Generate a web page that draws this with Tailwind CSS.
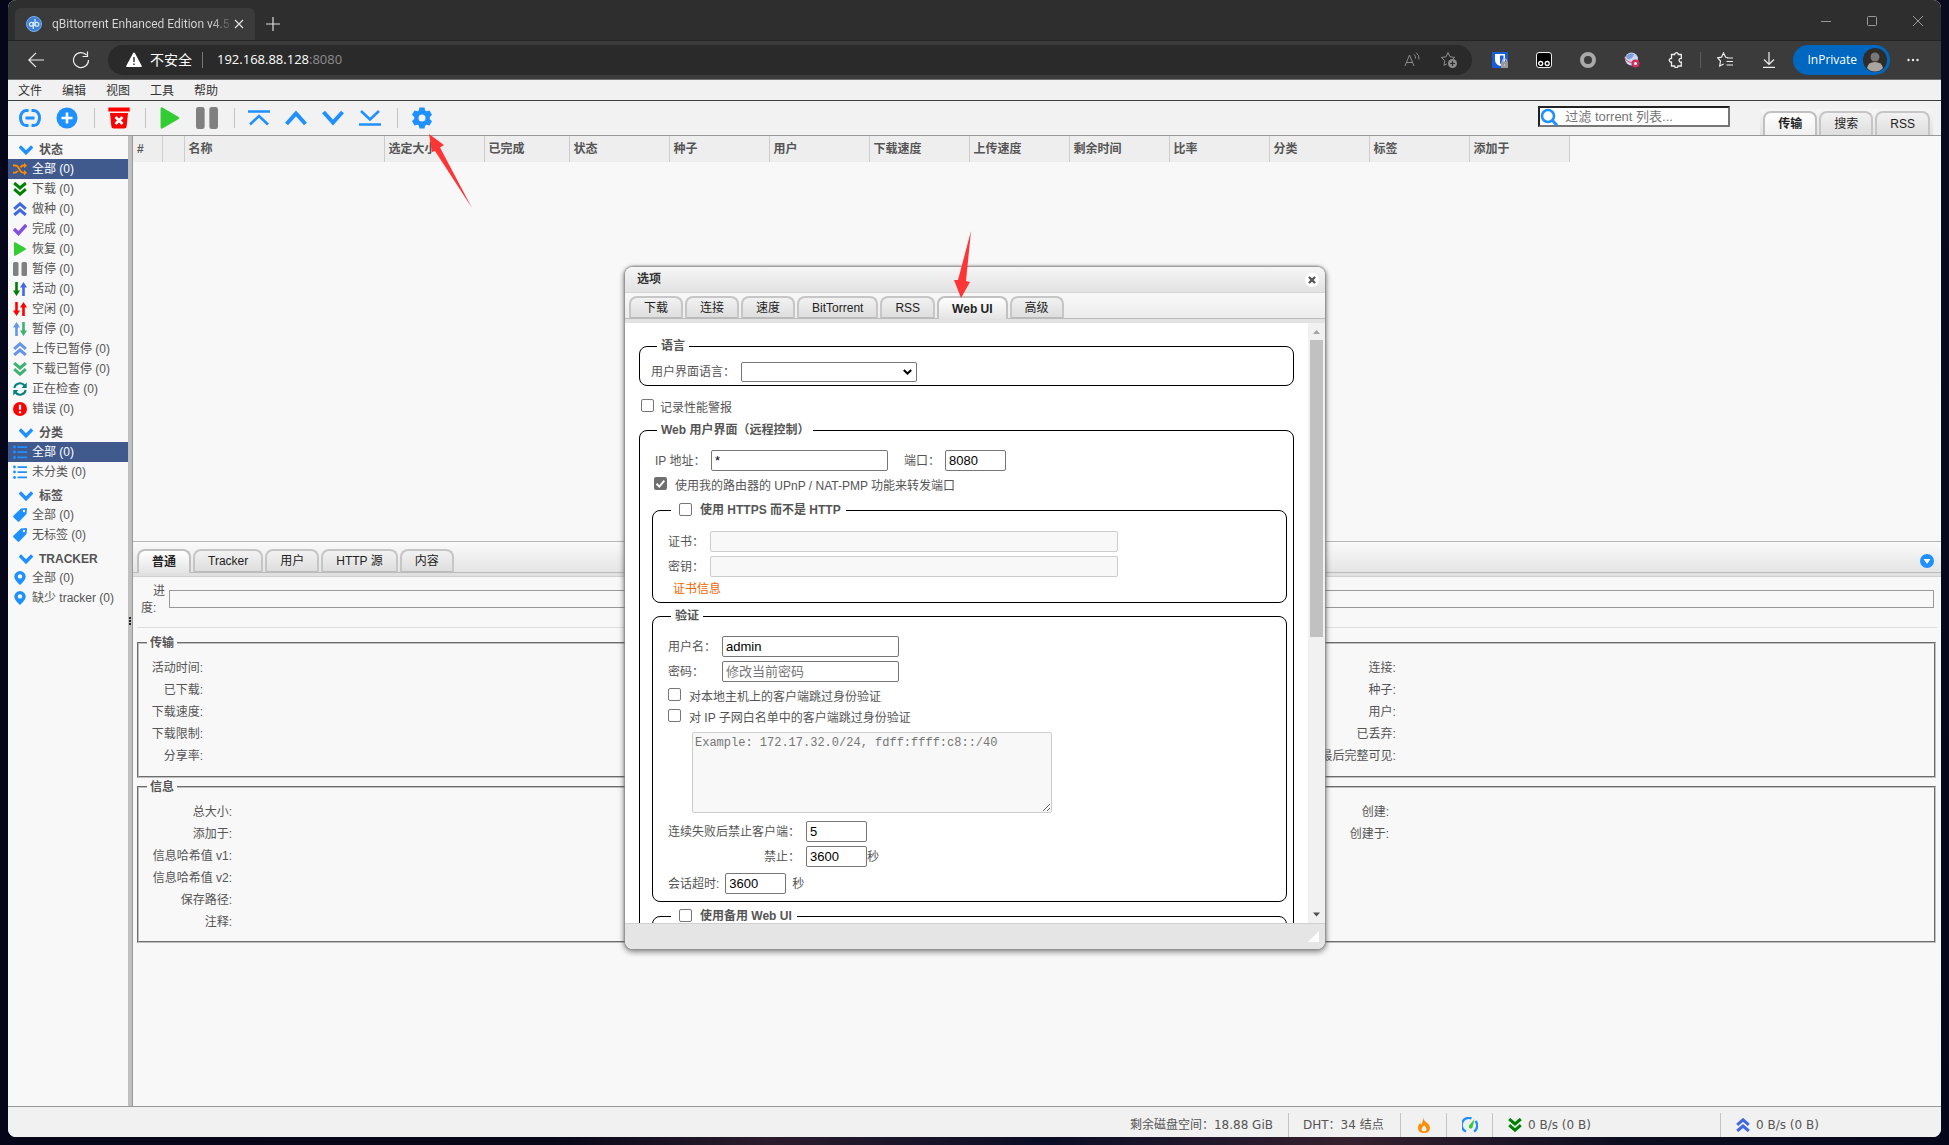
<!DOCTYPE html>
<html lang="zh-CN">
<head>
<meta charset="utf-8">
<meta name="viewport" content="width=device-width, initial-scale=1">
<title>qBittorrent Enhanced Edition</title>
<script src="https://cdn.jsdelivr.net/npm/@tailwindcss/browser@4"></script>
</head>
<body class="bg-[#05061a] font-['Liberation_Sans','Noto_Sans_CJK_SC',sans-serif] text-xs text-[#555]">
<svg class="hidden" aria-hidden="true">
  <symbol id="chev-down" viewBox="0 0 14 14"><path d="M.8 3.500L7 9.800l6.200-6.300" fill="none" stroke="currentColor" stroke-width="3.400"/></symbol>
  <symbol id="dbl-down" viewBox="0 0 14 14"><path d="M1.200 1L7 6l5.800-5M1.200 7.200l5.800 5 5.800-5" fill="none" stroke="currentColor" stroke-width="3"/></symbol>
  <symbol id="dbl-up" viewBox="0 0 14 14"><path d="M1.200 6.800L7 1.800l5.800 5M1.200 13L7 8l5.800 5" fill="none" stroke="currentColor" stroke-width="3"/></symbol>
  <symbol id="play" viewBox="0 0 14 14"><path d="M1 1.200q0-1.500 1.200-.9l10.300 6q.9.700 0 1.400l-10.300 6Q1 14.300 1 12.800z" fill="currentColor"/></symbol>
  <symbol id="pause" viewBox="0 0 14 14"><rect y="0" width="5.500" height="14" rx="1.500" fill="currentColor"/><rect x="8.500" width="5.500" height="14" rx="1.500" fill="currentColor"/></symbol>
  <symbol id="arr-down" viewBox="0 0 7 14"><path d="M2.200 0h2.600v8.500H7L3.500 14 0 8.500h2.200z" fill="currentColor"/></symbol>
  <symbol id="arr-up" viewBox="0 0 7 14"><path d="M2.200 14h2.600V5.500H7L3.500 0 0 5.500h2.200z" fill="currentColor"/></symbol>
  <symbol id="list" viewBox="0 0 14 14"><g fill="currentColor"><circle cx="1.500" cy="2" r="1.400"/><circle cx="1.500" cy="7" r="1.400"/><circle cx="1.500" cy="12.500" r="1.400"/><path d="M4.500 1.200H14v1.700H4.500zM4.500 6.200H14v1.700H4.500zM4.500 11.600H14v1.700H4.500z"/></g></symbol>
  <symbol id="tag" viewBox="0 0 14 14"><path d="M8 .5L13 0q1 0 1 1l-.5 5L6.500 13.300q-1 1-2 0L.6 9.600q-1-1 0-2z" fill="currentColor"/><circle cx="11" cy="3" r="1.200" fill="#f8f8f8"/></symbol>
  <symbol id="pin" viewBox="0 0 14 14"><path fill-rule="evenodd" d="M7 0a5.700 5.700 0 0 1 5.700 5.700C12.700 9 7 14 7 14S1.300 9 1.300 5.700A5.700 5.700 0 0 1 7 0zm0 3.200a2.200 2.200 0 1 0 0 4.400 2.200 2.200 0 0 0 0-4.400z" fill="currentColor"/></symbol>
</svg>

<div class="relative flex min-h-screen flex-col bg-[linear-gradient(100deg,#05061a_0%,#070717_35%,#2b1c2c_45%,#0a0d26_58%,#35202e_72%,#0d0d20_85%,#05061a_100%)] px-2 pb-2">
<div class="flex flex-1 flex-col overflow-hidden rounded-lg bg-[#f8f8f8]">

  <!-- Browser tab strip -->
  <header class="bg-[#2e2e2e]">
    <div class="flex h-[41px] items-end border-b border-[#232323]">
      <div class="ml-[7px] flex h-8 w-60 items-center rounded-t-md bg-[#3b3b3b] pl-[11px] pr-[10px]">
        <svg class="h-4 w-4 shrink-0" viewBox="0 0 16 16"><circle cx="8" cy="8" r="7.500" fill="#3f7fd6" stroke="#7db1ee"/><g fill="none" stroke="#d8e9ff" stroke-width="1.300"><circle cx="5.400" cy="8.300" r="1.900"/><path d="M7.300 6v7M9 3v7"/><circle cx="10.900" cy="8.300" r="1.900"/></g></svg>
        <span class="ml-[10px] flex-1 bg-[linear-gradient(90deg,#d8d8d8_88%,#3b3b3b)] bg-clip-text font-['Roboto',sans-serif] whitespace-nowrap text-transparent">qBittorrent Enhanced Edition v4.5</span>
        <button class="h-3 w-3 shrink-0" aria-label="关闭标签页"><svg viewBox="0 0 12 12"><path d="M2 2l8 8M10 2l-8 8" stroke="#ddd" stroke-width="1.300"/></svg></button>
      </div>
      <button class="mb-2 ml-[10px] h-4 w-4" aria-label="新建标签页"><svg viewBox="0 0 16 16"><path d="M8 1v14M1 8h14" stroke="#ddd" stroke-width="1.200"/></svg></button>
      <div class="mb-[14px] ml-auto mr-[18px] flex gap-9">
        <button aria-label="最小化"><svg class="h-[10px] w-[10px]" viewBox="0 0 10 10"><path d="M0 5.500h10" stroke="#999"/></svg></button>
        <button aria-label="最大化"><svg class="h-[10px] w-[10px]" viewBox="0 0 10 10"><rect x=".5" y=".5" width="9" height="9" rx="1" fill="none" stroke="#999"/></svg></button>
        <button aria-label="关闭"><svg class="h-[10px] w-[10px]" viewBox="0 0 10 10"><path d="M0 0l10 10M10 0L0 10" stroke="#999"/></svg></button>
      </div>
    </div>
    <div class="flex h-[39px] items-center border-b border-[#707070] bg-[#3b3b3b] font-['Open_Sans','Noto_Sans_CJK_SC',sans-serif] text-white">
      <button class="ml-5" aria-label="返回"><svg class="h-4 w-4" viewBox="0 0 16 16"><path d="M16 8H.8M8 .8L.8 8 8 15.200" fill="none" stroke="#eee" stroke-width="1.200"/></svg></button>
      <button class="ml-7" aria-label="刷新"><svg class="h-[18px] w-[18px]" viewBox="0 0 18 18"><path d="M16.500 9A7.500 7.500 0 1 1 14.500 4M10.500 5.500h5V.5" fill="none" stroke="#eee" stroke-width="1.200"/></svg></button>
      <div class="ml-[18px] flex h-[30px] flex-1 items-center rounded-full bg-[#2a2a2a] pl-[18px] pr-[14px]">
        <svg class="h-4 w-4" viewBox="0 0 16 16"><path d="M8 .5q.7 0 1 .7l6.700 12.500q.6 1.300-.8 1.300H1.100q-1.400 0-.8-1.300L7 1.200q.3-.7 1-.7z" fill="#fff"/><path d="M8 5v5M8 11.500v1.500" stroke="#2a2a2a" stroke-width="1.400"/></svg>
        <span class="ml-2 text-sm leading-5">不安全</span>
        <span class="ml-[10px] h-4 w-px bg-[#777]"></span>
        <span class="ml-[14px] flex-1 text-[13px]">192.168.88.128<span class="text-[#8d8d8d]">:8080</span></span>
        <svg class="h-4 w-4" viewBox="0 0 16 16" fill="none" stroke="#8d8d8d"><path d="M1 14L5.500 3 10 14M2.500 10.500h6M10 2.500q2 1.500 1.500 4M12 .5q3.500 2.500 3 7"/></svg>
        <svg class="ml-5 h-[18px] w-[18px]" viewBox="0 0 18 18"><path d="M8 1.500l2 4.300 4.700.6-3.400 3.300M8 1.500L6 5.800l-4.700.6 3.500 3.300-.9 4.700L7 12.800" fill="none" stroke="#8d8d8d"/><circle cx="12.500" cy="12.500" r="4.500" fill="#8d8d8d"/><path d="M12.500 10v5M10 12.500h5" stroke="#2a2a2a" stroke-width="1.200"/></svg>
      </div>
      <div class="ml-5 flex items-center gap-7">
        <svg class="h-4 w-4" viewBox="0 0 16 16"><rect width="16" height="16" rx="1" fill="#175ddc"/><path d="M3 2h10v6q0 4-5 6-5-2-5-6z" fill="#fff"/><path d="M8 3.500h3.500V8q0 2.500-3.500 4z" fill="#175ddc"/><path d="M9 9.500h7V16H9z" fill="#999"/><path d="M10.500 9.500V8q2-2.500 4 0v1.500M12.500 12v2" fill="none" stroke="#bbb" stroke-width="1.200"/></svg>
        <svg class="h-4 w-4" viewBox="0 0 16 16"><rect x=".5" y=".5" width="15" height="15" rx="2.500" stroke="#eee"/><circle cx="4.700" cy="11.500" r="2" fill="none" stroke="#fff" stroke-width="1.300"/><circle cx="11.200" cy="11.500" r="2" fill="none" stroke="#fff" stroke-width="1.300"/></svg>
        <svg class="h-4 w-4" viewBox="0 0 16 16"><circle cx="8" cy="8" r="6" fill="none" stroke="#a9a9a9" stroke-width="4"/></svg>
        <svg class="h-4 w-4" viewBox="0 0 16 16"><circle cx="7.500" cy="7" r="6.500" fill="#c9d8f5"/><path d="M2 4q4-4 8-2-1 4-4 5T2 4z" fill="#7f9ee0"/><path d="M0 5q3 7 15 6" fill="none" stroke="#e0524a"/><circle cx="11.500" cy="11.500" r="4" fill="#d32f5a"/><circle cx="11.500" cy="11.500" r="1.500" fill="#fff"/></svg>
        <svg class="h-4 w-4" viewBox="0 0 16 16"><path d="M4.500 2.500h2.200a1.800 1.800 0 1 1 3.600 0h3v4a1.800 1.800 0 1 0 0 3.500v4H10a1.700 1.700 0 1 1-3.400 0H3.500V10a1.800 1.800 0 1 1 0-3.500v-4z" fill="none" stroke="#eee" stroke-width="1.300"/></svg>
      </div>
      <span class="ml-4 h-4 w-px bg-[#5c5c5c]"></span>
      <div class="ml-4 flex items-center gap-7">
        <svg class="h-4 w-4" viewBox="0 0 16 16" fill="none" stroke="#eee" stroke-width="1.200"><path d="M11 5.500l-2.300-.2L6.500 1 4.500 5.200.6 5.800 3.500 9l-.8 5 4-2M10 6h6M9.500 9.500H16M9.500 13H16"/></svg>
        <svg class="h-4 w-4" viewBox="0 0 16 16" fill="none" stroke="#eee" stroke-width="1.200"><path d="M8 0v12M3 7.500l5 5 5-5M2 15.400h12"/></svg>
      </div>
      <button class="ml-4 flex h-[30px] items-center gap-[6px] rounded-full bg-[#0067c0] pl-[14px] pr-[3px]">InPrivate
        <svg class="h-6 w-6" viewBox="0 0 24 24"><circle cx="12" cy="12" r="12" fill="#2f2b29"/><circle cx="12" cy="9" r="4.500" fill="#777"/><path d="M4 20q1-6 8-6t8 6q-3 3.500-8 3.500T4 20z" fill="#aaa59f"/></svg>
      </button>
      <button class="ml-[17px] mr-[22px]" aria-label="更多"><svg class="h-3 w-3" viewBox="0 0 12 12" fill="#eee"><circle cx="1.500" cy="6" r="1.200"/><circle cx="6" cy="6" r="1.200"/><circle cx="10.500" cy="6" r="1.200"/></svg></button>
    </div>
  </header>

  <!-- Menu bar -->
  <nav class="flex h-[21px] items-end gap-5 border-b border-[#3c3c3c] bg-[#f1f1f1] pl-[10px] leading-[18px] text-[#333]">
    <a href="#">文件</a><a href="#">编辑</a><a href="#">视图</a><a href="#">工具</a><a href="#">帮助</a>
  </nav>

  <!-- Toolbar -->
  <div class="flex h-[35px] items-center border-b border-[#999] bg-[#f2f2f2] pl-[10px] text-[#1e90ff]">
    <button aria-label="添加链接"><svg class="h-6 w-6" viewBox="0 0 24 24" fill="none" stroke="currentColor" stroke-width="3"><path d="M10.500 4.500H8a5.500 7.500 0 0 0 0 15h2.500M13.500 4.500H16a5.500 7.500 0 0 1 0 15h-2.500M7.500 12h9"/></svg></button>
    <button class="ml-[14px]" aria-label="添加文件"><svg class="h-[22px] w-[22px]" viewBox="0 0 22 22"><circle cx="11" cy="11" r="10.500" fill="currentColor"/><path d="M11 5.500v11M5.500 11h11" stroke="#fff" stroke-width="2.600"/></svg></button>
    <span class="ml-4 mr-[13px] h-5 w-px bg-[#c4c4c4]"></span>
    <button aria-label="删除"><svg class="h-[22px] w-[22px]" viewBox="0 0 22 22"><path d="M.3.500h21.400v4H.3z M2 6h18l-1.300 13q-.2 2.500-2.500 2.500H5.800Q3.500 21.500 3.300 19z" fill="red"/><path d="M7.500 10l7 7M14.500 10l-7 7" stroke="#fff" stroke-width="2.800"/></svg></button>
    <span class="ml-[15px] mr-[13px] h-5 w-px bg-[#c4c4c4]"></span>
    <button aria-label="恢复"><svg class="h-[22px] w-[22px] text-[#32cd32]"><use href="#play"/></svg></button>
    <button class="ml-[15px]" aria-label="暂停"><svg class="h-[22px] w-[22px] text-[#808080]"><use href="#pause"/></svg></button>
    <span class="ml-4 mr-[13px] h-5 w-px bg-[#c4c4c4]"></span>
    <div class="flex gap-[15px]">
      <button aria-label="置顶"><svg class="h-[22px] w-[22px]" viewBox="0 0 22 22" fill="none" stroke="currentColor" stroke-width="2.600"><path d="M0 4.500h22M2 17.500l9-8.500 9 8.500"/></svg></button>
      <button aria-label="上移"><svg class="h-[22px] w-[22px]" viewBox="0 0 22 22" fill="none" stroke="currentColor" stroke-width="4"><path d="M1.500 17L11 6.500 20.500 17"/></svg></button>
      <button aria-label="下移"><svg class="h-[22px] w-[22px]" viewBox="0 0 22 22" fill="none" stroke="currentColor" stroke-width="4"><path d="M1.500 5L11 15.500 20.500 5"/></svg></button>
      <button aria-label="置底"><svg class="h-[22px] w-[22px]" viewBox="0 0 22 22" fill="none" stroke="currentColor" stroke-width="2.600"><path d="M0 17.500h22M2 4l9 8.500L20 4"/></svg></button>
    </div>
    <span class="ml-4 mr-[13px] h-5 w-px bg-[#c4c4c4]"></span>
    <button aria-label="选项"><svg class="h-[22px] w-[22px]" viewBox="0 0 22 22"><path fill="currentColor" fill-rule="evenodd" d="M8.500.5h5l.7 3 1.300.8 3-.9 2.500 4.300-2.200 2.200v2.200l2.200 2.200-2.500 4.300-3-.9-1.300.8-.7 3h-5l-.7-3-1.300-.8-3 .9L1 14.300l2.200-2.200V9.900L1 7.700l2.500-4.300 3 .9 1.300-.8zM11 7.500a3.500 3.500 0 1 0 0 7 3.500 3.500 0 0 0 0-7z"/></svg></button>
    <div class="mb-[3px] ml-auto flex h-[21px] w-48 items-center border-2 border-t-[#222] border-r-[#767676] border-b-[#767676] border-l-[#222] bg-white">
      <svg class="h-[18px] w-[18px] shrink-0" viewBox="0 0 18 18" fill="none" stroke="currentColor"><circle cx="8" cy="8" r="6" stroke-width="2.600"/><path d="M12 12l5 5.500" stroke-width="3"/></svg>
      <input class="ml-[7px] min-w-0 flex-1 text-[13px] leading-4 text-black outline-none placeholder:text-[#757575]" type="text" placeholder="过滤 torrent 列表..." aria-label="过滤 torrent 列表">
    </div>
    <div class="ml-[30px] mr-2 flex h-[26px] items-end gap-[2px] self-end bg-linear-to-b from-[#f6f6f6] to-[#e2e2e2] px-[3px] leading-[22px] text-[#222]">
      <button class="h-6 rounded-t-lg border-2 border-b-0 border-[#c0c0c0] bg-linear-to-b from-white to-[#f0f0f0] px-[13px] font-bold">传输</button>
      <button class="h-6 rounded-t-lg border-2 border-b-0 border-[#c6c6c6] bg-linear-to-b from-[#f2f2f2] to-[#dedede] px-[13px]">搜索</button>
      <button class="h-6 rounded-t-lg border-2 border-b-0 border-[#c6c6c6] bg-linear-to-b from-[#f2f2f2] to-[#dedede] px-[13px]">RSS</button>
    </div>
  </div>

  <div class="flex flex-1">
    <!-- Filter sidebar -->
    <aside class="w-[120px] shrink-0 leading-[18px] whitespace-nowrap">
      <h2 class="flex h-[23px] items-center gap-[6px] pl-[11px] pt-1 font-bold"><svg class="h-[14px] w-[14px] text-[#1e90ff]"><use href="#chev-down"/></svg>状态</h2>
      <ul>
        <li><a href="#" class="flex h-5 items-center gap-[5px] bg-[#415a8d] pb-px pl-[5px] text-white"><svg class="h-[14px] w-[14px]" viewBox="0 0 14 14" fill="none" stroke="#ff8c00" stroke-width="1.800"><path d="M0 3.500h2.500q1.500 0 2.500 1.500l2.500 4Q8.500 10.700 10 10.700h2M0 10.700h2.500L5 9M7.500 5.500Q8.500 3.500 10 3.500h2"/><path d="M11 .8L14 3.500l-3 2.700zM11 8l3 2.700-3 2.700z" fill="#ff8c00" stroke="none"/></svg>全部 (0)</a></li>
        <li><a href="#" class="flex h-5 items-center gap-[5px] pb-px pl-[5px]"><svg class="h-[14px] w-[14px] text-[#008000]"><use href="#dbl-down"/></svg>下载 (0)</a></li>
        <li><a href="#" class="flex h-5 items-center gap-[5px] pb-px pl-[5px]"><svg class="h-[14px] w-[14px] text-[#4169e1]"><use href="#dbl-up"/></svg>做种 (0)</a></li>
        <li><a href="#" class="flex h-5 items-center gap-[5px] pb-px pl-[5px]"><svg class="h-[14px] w-[14px]" viewBox="0 0 14 14"><path d="M1 7l4.500 4.500L13.300 3" fill="none" stroke="#8350e0" stroke-width="3.400"/></svg>完成 (0)</a></li>
        <li><a href="#" class="flex h-5 items-center gap-[5px] pb-px pl-[5px]"><svg class="h-[14px] w-[14px] text-[#32cd32]"><use href="#play"/></svg>恢复 (0)</a></li>
        <li><a href="#" class="flex h-5 items-center gap-[5px] pb-px pl-[5px]"><svg class="h-[14px] w-[14px] text-[#808080]"><use href="#pause"/></svg>暂停 (0)</a></li>
        <li><a href="#" class="flex h-5 items-center pb-px pl-[5px]"><svg class="h-[14px] w-[7px] text-[#008000]"><use href="#arr-down"/></svg><svg class="mr-[5px] h-[14px] w-[7px] text-[#4169e1]"><use href="#arr-up"/></svg>活动 (0)</a></li>
        <li><a href="#" class="flex h-5 items-center pb-px pl-[5px]"><svg class="h-[14px] w-[7px] text-[#ff0000]"><use href="#arr-down"/></svg><svg class="mr-[5px] h-[14px] w-[7px] text-[#ff0000]"><use href="#arr-up"/></svg>空闲 (0)</a></li>
        <li><a href="#" class="flex h-5 items-center pb-px pl-[5px]"><svg class="h-[14px] w-[7px] text-[#6495ed]"><use href="#arr-up"/></svg><svg class="mr-[5px] h-[14px] w-[7px] text-[#3cb371]"><use href="#arr-down"/></svg>暂停 (0)</a></li>
        <li><a href="#" class="flex h-5 items-center gap-[5px] pb-px pl-[5px]"><svg class="h-[14px] w-[14px] text-[#6495ed]"><use href="#dbl-up"/></svg>上传已暂停 (0)</a></li>
        <li><a href="#" class="flex h-5 items-center gap-[5px] pb-px pl-[5px]"><svg class="h-[14px] w-[14px] text-[#3cb371]"><use href="#dbl-down"/></svg>下载已暂停 (0)</a></li>
        <li><a href="#" class="flex h-5 items-center gap-[5px] pb-px pl-[5px]"><svg class="h-[14px] w-[14px]" viewBox="0 0 14 14"><path d="M1.300 6A5.800 5.800 0 0 1 11.500 3.500M12.700 8A5.800 5.800 0 0 1 2.500 10.500" fill="none" stroke="#008080" stroke-width="2"/><path d="M13.700.5V6H8.500zM.3 13.500V8h5.200z" fill="#008080"/></svg>正在检查 (0)</a></li>
        <li><a href="#" class="flex h-5 items-center gap-[5px] pb-px pl-[5px]"><svg class="h-[14px] w-[14px]" viewBox="0 0 14 14"><circle cx="7" cy="7" r="7" fill="red"/><path d="M7 2.800v5M7 9.300v2" stroke="#fff" stroke-width="2.200"/></svg>错误 (0)</a></li>
      </ul>
      <h2 class="flex h-[23px] items-center gap-[6px] pl-[11px] pt-1 font-bold"><svg class="h-[14px] w-[14px] text-[#1e90ff]"><use href="#chev-down"/></svg>分类</h2>
      <ul>
        <li><a href="#" class="flex h-5 items-center gap-[5px] bg-[#415a8d] pb-px pl-[5px] text-white"><svg class="h-[14px] w-[14px] text-[#1e90ff]"><use href="#list"/></svg>全部 (0)</a></li>
        <li><a href="#" class="flex h-5 items-center gap-[5px] pb-px pl-[5px]"><svg class="h-[14px] w-[14px] text-[#1e90ff]"><use href="#list"/></svg>未分类 (0)</a></li>
      </ul>
      <h2 class="flex h-[23px] items-center gap-[6px] pl-[11px] pt-1 font-bold"><svg class="h-[14px] w-[14px] text-[#1e90ff]"><use href="#chev-down"/></svg>标签</h2>
      <ul>
        <li><a href="#" class="flex h-5 items-center gap-[5px] pb-px pl-[5px]"><svg class="h-[14px] w-[14px] text-[#1e90ff]"><use href="#tag"/></svg>全部 (0)</a></li>
        <li><a href="#" class="flex h-5 items-center gap-[5px] pb-px pl-[5px]"><svg class="h-[14px] w-[14px] text-[#1e90ff]"><use href="#tag"/></svg>无标签 (0)</a></li>
      </ul>
      <h2 class="flex h-[23px] items-center gap-[6px] pl-[11px] pt-1 font-bold"><svg class="h-[14px] w-[14px] text-[#1e90ff]"><use href="#chev-down"/></svg>TRACKER</h2>
      <ul>
        <li><a href="#" class="flex h-5 items-center gap-[5px] pb-px pl-[5px]"><svg class="h-[14px] w-[14px] text-[#1e90ff]"><use href="#pin"/></svg>全部 (0)</a></li>
        <li><a href="#" class="flex h-5 items-center gap-[5px] pb-px pl-[5px]"><svg class="h-[14px] w-[14px] text-[#1e90ff]"><use href="#pin"/></svg>缺少 tracker (0)</a></li>
      </ul>
    </aside>
    <div class="flex w-[5px] shrink-0 flex-col items-center justify-center border-r border-[#999] bg-[#c0c0c0]">
      <svg class="h-2 w-[2px]" viewBox="0 0 2 8" fill="#222"><path d="M0 0h2v2H0zM0 3h2v2H0zM0 6h2v2H0z"/></svg>
    </div>

    <main class="flex min-w-0 flex-1 flex-col">
      <!-- Torrent list -->
      <div class="h-[405px]">
        <table class="table-fixed border-collapse bg-[#eee] text-left leading-[18px]">
          <thead><tr class="h-[26px]">
            <th class="w-[29px] border-r border-[#ccc] pl-1">#</th>
            <th class="w-[22px] border-r border-[#ccc]"></th>
            <th class="w-[200px] border-r border-[#ccc] pl-1">名称</th>
            <th class="w-[100px] border-r border-[#ccc] pl-1">选定大小</th>
            <th class="w-[85px] border-r border-[#ccc] pl-1">已完成</th>
            <th class="w-[100px] border-r border-[#ccc] pl-1">状态</th>
            <th class="w-[100px] border-r border-[#ccc] pl-1">种子</th>
            <th class="w-[100px] border-r border-[#ccc] pl-1">用户</th>
            <th class="w-[100px] border-r border-[#ccc] pl-1">下载速度</th>
            <th class="w-[100px] border-r border-[#ccc] pl-1">上传速度</th>
            <th class="w-[100px] border-r border-[#ccc] pl-1">剩余时间</th>
            <th class="w-[100px] border-r border-[#ccc] pl-1">比率</th>
            <th class="w-[100px] border-r border-[#ccc] pl-1">分类</th>
            <th class="w-[100px] border-r border-[#ccc] pl-1">标签</th>
            <th class="w-[100px] border-r border-[#ccc] pl-1">添加于</th>
          </tr></thead>
        </table>
      </div>

      <!-- Properties panel tabs -->
      <div class="flex h-9 items-end border-t border-[#b5b5b5] border-b border-b-[#d0d0d0] bg-linear-to-b from-[#fafafa] to-[#e2e2e2]">
        <div class="flex h-[30px] flex-1 items-end gap-[2px] border-b-[3px] border-[#e0e0e0] pl-1 leading-5 text-[#222] shadow-[inset_0_-1px_0_#bbb]">
          <button class="h-6 rounded-t-lg border-2 border-b-0 border-[#c0c0c0] bg-linear-to-b from-white to-[#e4e4e4] px-[13px] font-bold">普通</button>
          <button class="h-6 rounded-t-lg border-2 border-[#c6c6c6] border-b-[#bbb] bg-linear-to-b from-[#f2f2f2] to-[#dedede] px-[13px]">Tracker</button>
          <button class="h-6 rounded-t-lg border-2 border-[#c6c6c6] border-b-[#bbb] bg-linear-to-b from-[#f2f2f2] to-[#dedede] px-[13px]">用户</button>
          <button class="h-6 rounded-t-lg border-2 border-[#c6c6c6] border-b-[#bbb] bg-linear-to-b from-[#f2f2f2] to-[#dedede] px-[13px]">HTTP 源</button>
          <button class="h-6 rounded-t-lg border-2 border-[#c6c6c6] border-b-[#bbb] bg-linear-to-b from-[#f2f2f2] to-[#dedede] px-[13px]">内容</button>
          <button class="mr-[7px] mb-[5px] ml-auto h-[14px] w-[14px]" aria-label="折叠"><svg viewBox="0 0 14 14"><circle cx="7" cy="7" r="7" fill="#1e90ff"/><path d="M3.500 5h7L7 10z" fill="#fff"/></svg></button>
        </div>
      </div>

      <section class="px-1 leading-[17px]">
        <div class="flex h-[51px] items-center border-b border-[#ddd] pl-1 pr-[3px]">
          <div class="mr-1 mb-1 w-6 text-right"><span class="block">进</span><span class="block text-left">度:</span></div>
          <div class="mb-[6px] h-[18px] flex-1 border border-[#999]"></div>
        </div>
        <fieldset class="mt-[7px] mr-[1px] h-[143px] border-2 border-[#c0c0c0] [border-style:groove]">
          <legend class="ml-2 h-4 px-[3px] font-bold leading-4">传输</legend>
          <table class="mt-[6px] w-full table-fixed text-right">
            <colgroup><col class="w-16"><col class="w-[62%]"><col class="w-20"><col></colgroup>
            <tbody>
            <tr class="h-[22px]"><td>活动时间:</td><td></td><td>连接:</td><td></td></tr>
            <tr class="h-[22px]"><td>已下载:</td><td></td><td>种子:</td><td></td></tr>
            <tr class="h-[22px]"><td>下载速度:</td><td></td><td>用户:</td><td></td></tr>
            <tr class="h-[22px]"><td>下载限制:</td><td></td><td>已丢弃:</td><td></td></tr>
            <tr class="h-[22px]"><td>分享率:</td><td></td><td class="whitespace-nowrap">最后完整可见:</td><td></td></tr>
            </tbody>
          </table>
        </fieldset>
        <fieldset class="mt-[1px] mr-[1px] h-[164px] border-2 border-[#c0c0c0] [border-style:groove]">
          <legend class="ml-2 h-4 px-[3px] font-bold leading-4">信息</legend>
          <table class="mt-[6px] w-full table-fixed text-right">
            <colgroup><col class="w-[93px]"><col class="w-[60%]"><col class="w-20"><col></colgroup>
            <tbody>
            <tr class="h-[22px]"><td>总大小:</td><td></td><td>创建:</td><td></td></tr>
            <tr class="h-[22px]"><td>添加于:</td><td></td><td>创建于:</td><td></td></tr>
            <tr class="h-[22px]"><td>信息哈希值 v1:</td><td></td><td></td><td></td></tr>
            <tr class="h-[22px]"><td>信息哈希值 v2:</td><td></td><td></td><td></td></tr>
            <tr class="h-[22px]"><td>保存路径:</td><td></td><td></td><td></td></tr>
            <tr class="h-[22px]"><td>注释:</td><td></td><td></td><td></td></tr>
            </tbody>
          </table>
        </fieldset>
      </section>
    </main>
  </div>

  <!-- Status bar -->
  <footer class="flex h-[31px] items-center justify-end border-t border-[#999] bg-[#f1f1f1] pt-[6px] font-['DejaVu_Sans','Noto_Sans_CJK_SC',sans-serif] leading-6">
    <div class="border-r border-[#c4c4c4] pr-[15px]">剩余磁盘空间：18.88 GiB</div>
    <div class="w-28 border-r border-[#c4c4c4] pl-[14px] whitespace-nowrap">DHT：34 结点</div>
    <div class="flex h-6 w-[46px] items-center justify-center border-r border-[#c4c4c4]"><svg class="h-4 w-4" viewBox="0 0 16 16"><path fill-rule="evenodd" d="M7.500 0q-.5 3 3 5.500Q14 8 14 10.500 14 16 8 16t-6-5q0-2.500 2-5l1.500 2Q7 4 7.500 0zm.7 8Q5.500 11 5.500 12.500 6 14.500 8 14.500t2.500-2Q10.500 11 8.200 8z" fill="#ff8c00"/></svg></div>
    <div class="flex h-6 w-[46px] items-center justify-center border-r border-[#c4c4c4]"><svg class="h-4 w-4" viewBox="0 0 16 16"><path d="M4 14.500A7 7 0 0 1 9.500 1.500M13.500 4A7 7 0 0 1 12 14.500" fill="none" stroke="#1e90ff" stroke-width="2.400"/><path d="M12.500 2L10.500 10.500q-1 1.800-2.900.8-1.500-1-.5-2.800z" fill="#32cd32"/></svg></div>
    <div class="flex h-6 w-[228px] items-center gap-[6px] border-r border-[#c4c4c4] pl-[15px]"><svg class="h-[14px] w-[14px] text-[#008000]"><use href="#dbl-down"/></svg>0 B/s (0 B)</div>
    <div class="flex h-6 w-[220px] items-center gap-[6px] pl-[15px]"><svg class="h-[14px] w-[14px] text-[#4169e1]"><use href="#dbl-up"/></svg>0 B/s (0 B)</div>
  </footer>
</div>

<!-- Options dialog -->
<div class="absolute inset-x-0 top-[267px] flex justify-center pl-px">
  <div role="dialog" aria-label="选项" class="w-[700px] overflow-hidden rounded-lg bg-white shadow-[0_0_2px_1px_#8a8a8a,0_2px_5px_2px_rgba(0,0,0,0.35)]">
    <div class="flex h-[26px] items-center justify-between border-b border-[#d4d4d4] bg-linear-to-b from-[#f6f6f6] to-[#e2e2e2] pl-3 pr-[6px]">
      <h1 class="pb-px font-bold leading-5 text-[#333]">选项</h1>
      <button class="h-[14px] w-[14px]" aria-label="关闭选项"><svg viewBox="0 0 14 14"><circle cx="7" cy="7" r="7" fill="#fff"/><path d="M4 4l6 6M10 4l-6 6" stroke="#555" stroke-width="2.400"/></svg></button>
    </div>
    <div class="flex h-[30px] items-end gap-[2px] border-b-4 border-[#e2e2e2] bg-linear-to-b from-[#f8f8f8] to-[#ececec] pl-1 leading-5 text-[#222] shadow-[inset_0_-1px_0_#bbb]">
      <button class="h-[23px] rounded-t-lg border-2 border-[#c6c6c6] border-b-[#bbb] bg-linear-to-b from-[#f2f2f2] to-[#dedede] px-[13px]">下载</button>
      <button class="h-[23px] rounded-t-lg border-2 border-[#c6c6c6] border-b-[#bbb] bg-linear-to-b from-[#f2f2f2] to-[#dedede] px-[13px]">连接</button>
      <button class="h-[23px] rounded-t-lg border-2 border-[#c6c6c6] border-b-[#bbb] bg-linear-to-b from-[#f2f2f2] to-[#dedede] px-[13px]">速度</button>
      <button class="h-[23px] rounded-t-lg border-2 border-[#c6c6c6] border-b-[#bbb] bg-linear-to-b from-[#f2f2f2] to-[#dedede] px-[13px]">BitTorrent</button>
      <button class="h-[23px] rounded-t-lg border-2 border-[#c6c6c6] border-b-[#bbb] bg-linear-to-b from-[#f2f2f2] to-[#dedede] px-[13px]">RSS</button>
      <button class="h-[23px] rounded-t-lg border-2 border-b-0 border-[#c0c0c0] bg-linear-to-b from-white to-[#e4e4e4] px-[13px] font-bold">Web UI</button>
      <button class="h-[23px] rounded-t-lg border-2 border-[#c6c6c6] border-b-[#bbb] bg-linear-to-b from-[#f2f2f2] to-[#dedede] px-[13px]">高级</button>
    </div>

    <div class="flex h-[600px]">
      <form class="min-w-0 flex-1 overflow-hidden px-[14px] pt-[14px] leading-[18px]">
        <fieldset class="rounded-lg border border-black px-[11px] pb-[3px]">
          <legend class="ml-[6px] px-1 font-bold">语言</legend>
          <div class="flex items-center gap-[6px] pt-[7px]">
            <label for="lang">用户界面语言：</label>
            <div class="relative h-5 w-44">
              <select id="lang" class="h-5 w-full appearance-none rounded-xs border border-[#767676] bg-white"><option></option></select>
              <svg class="pointer-events-none absolute top-[7px] right-[5px] h-[6px] w-[9px]" viewBox="0 0 9 6"><path d="M.8 1l3.700 3.500L8.200 1" fill="none" stroke="#000" stroke-width="2"/></svg>
            </div>
          </div>
        </fieldset>
        <div class="mt-[13px] mb-[4px] flex gap-[6px] pl-[2px]">
          <input id="perf" type="checkbox" class="h-[13px] w-[13px] appearance-none rounded-[2px] border border-[#767676] bg-white">
          <label for="perf">记录性能警报</label>
        </div>
        <fieldset class="h-[900px] rounded-lg border border-black pl-3 pr-[6px]">
          <legend class="ml-[5px] px-1 font-bold">Web 用户界面（远程控制）</legend>
          <div class="flex items-center pt-[11px] pl-[3px]">
            <label for="ip" class="w-14">IP 地址：</label>
            <input id="ip" type="text" value="*" class="h-[21px] w-[177px] rounded-xs border border-[#767676] px-[3px] text-[13px] text-black">
            <label for="port" class="ml-4 w-[41px]">端口：</label>
            <input id="port" type="text" value="8080" class="h-[21px] w-[61px] rounded-xs border border-[#767676] px-[3px] text-[13px] text-black">
          </div>
          <div class="mt-[6px] flex gap-2 pl-[2px]">
            <span class="relative h-[14px] w-[13px]">
              <input id="upnp" type="checkbox" checked class="block h-[13px] w-[13px] appearance-none rounded-[2px] bg-[#707070]">
              <svg class="pointer-events-none absolute top-0 left-0 h-[13px] w-[13px]" viewBox="0 0 13 13"><path d="M2.500 6.800l2.800 2.800 5-6" fill="none" stroke="#fff" stroke-width="2"/></svg>
            </span>
            <label for="upnp">使用我的路由器的 UPnP / NAT-PMP 功能来转发端口</label>
          </div>

          <fieldset class="mt-[6px] rounded-lg border border-black px-[15px] pb-1">
            <legend class="ml-[3px] flex gap-2 pl-2 pr-[5px] font-bold">
              <input id="https" type="checkbox" class="mt-[2px] h-[13px] w-[13px] appearance-none rounded-[2px] border border-[#767676] bg-white">
              <label for="https">使用 HTTPS 而不是 HTTP</label>
            </legend>
            <div class="flex items-center pt-3">
              <label for="cert" class="w-[42px]">证书：</label>
              <input id="cert" type="text" disabled class="h-[21px] w-[408px] rounded-xs border border-[#ccc] bg-[#f8f8f8]">
            </div>
            <div class="mt-1 flex items-center">
              <label for="key" class="w-[42px]">密钥：</label>
              <input id="key" type="text" disabled class="h-[21px] w-[408px] rounded-xs border border-[#ccc] bg-[#f8f8f8]">
            </div>
            <a href="#" class="mt-[3px] ml-[5px] block text-[#e60]">证书信息</a>
          </fieldset>

          <fieldset class="mt-1 rounded-lg border border-black pr-[15px] pb-[7px] pl-[15px]">
            <legend class="ml-[3px] px-1 font-bold">验证</legend>
            <div class="flex items-center pt-[11px]">
              <label for="user" class="w-[54px]">用户名：</label>
              <input id="user" type="text" value="admin" class="h-[21px] w-[177px] rounded-xs border border-[#767676] px-[3px] text-[13px] text-black">
            </div>
            <div class="mt-1 flex items-center">
              <label for="pass" class="w-[54px]">密码：</label>
              <input id="pass" type="password" placeholder="修改当前密码" class="h-[21px] w-[177px] rounded-xs border border-[#767676] px-[3px] text-[13px] placeholder:text-[#757575]">
            </div>
            <div class="mt-[6px] flex gap-2">
              <input id="local" type="checkbox" class="h-[13px] w-[13px] appearance-none rounded-[2px] border border-[#767676] bg-white">
              <label for="local">对本地主机上的客户端跳过身份验证</label>
            </div>
            <div class="mt-[3px] flex gap-2">
              <input id="subnet" type="checkbox" class="h-[13px] w-[13px] appearance-none rounded-[2px] border border-[#767676] bg-white">
              <label for="subnet">对 IP 子网白名单中的客户端跳过身份验证</label>
            </div>
            <textarea disabled aria-label="IP 子网白名单" placeholder="Example: 172.17.32.0/24, fdff:ffff:c8::/40" class="mt-[5px] ml-6 block h-[81px] w-[360px] resize rounded-xs border border-[#ccc] bg-[#f8f8f8] px-[2px] font-['Liberation_Mono',monospace] leading-5 placeholder:text-[#757575]"></textarea>
            <div class="mt-2 flex items-center gap-[6px]">
              <label for="fails" class="w-[132px] text-right">连续失败后禁止客户端：</label>
              <input id="fails" type="text" value="5" class="h-[21px] w-[61px] rounded-xs border border-[#767676] px-[3px] text-[13px] text-black">
            </div>
            <div class="mt-1 flex items-center">
              <label for="ban" class="mr-[6px] w-[132px] text-right">禁止：</label>
              <input id="ban" type="text" value="3600" class="h-[21px] w-[61px] rounded-xs border border-[#767676] px-[3px] text-[13px] text-black">
              <span>秒</span>
            </div>
            <div class="mt-[6px] flex items-center gap-[6px]">
              <label for="session">会话超时:</label>
              <input id="session" type="text" value="3600" class="h-[21px] w-[61px] rounded-xs border border-[#767676] px-[3px] text-[13px] text-black">
              <span>秒</span>
            </div>
          </fieldset>

          <fieldset class="mt-[5px] h-24 rounded-lg border border-black px-[15px]">
            <legend class="ml-[3px] flex gap-2 pl-2 pr-[5px] font-bold">
              <input id="alt" type="checkbox" class="mt-[2px] h-[13px] w-[13px] appearance-none rounded-[2px] border border-[#767676] bg-white">
              <label for="alt">使用备用 Web UI</label>
            </legend>
          </fieldset>
        </fieldset>
      </form>
      <div class="flex w-[17px] flex-col items-center bg-[#f1f1f1]">
        <svg class="h-[17px] w-[17px] shrink-0" viewBox="0 0 17 17"><path d="M5 11l3.500-4 3.500 4z" fill="#a3a3a3"/></svg>
        <div class="h-[297px] w-[13px] bg-[#c1c1c1]"></div>
        <svg class="mt-auto h-[17px] w-[17px] shrink-0" viewBox="0 0 17 17"><path d="M5 6.500l3.500 4 3.500-4z" fill="#505050"/></svg>
      </div>
    </div>
    <div class="flex h-[26px] items-center justify-end border-t border-[#d0d0d0] bg-[#e5e5e5] pr-[6px]">
      <svg class="h-[11px] w-[11px]" viewBox="0 0 11 11"><path d="M11 0v11H0z" fill="#fff"/></svg>
    </div>
  </div>
</div>

<!-- Pointer annotations -->
<svg class="pointer-events-none absolute top-[134px] left-[429px] h-[74px] w-11" viewBox="0 0 44 74"><path d="M0 0l15 11-4 2.500L43 74 6 17l-3 1z" fill="#ff3535"/></svg>
<svg class="pointer-events-none absolute top-[231px] left-[953px] h-[67px] w-5" viewBox="0 0 20 67"><path d="M8 67L1 49h4L18 0l-5 50 4 1z" fill="#ff3535"/></svg>
</div>
</body>
</html>
